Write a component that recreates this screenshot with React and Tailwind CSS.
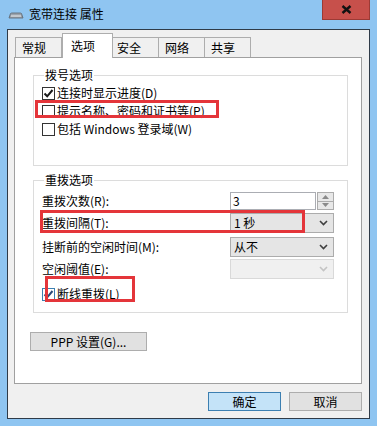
import React from 'react';

const font = "font-['Noto_Sans_CJK_SC','Noto_Sans',sans-serif]";

const CheckMark = ({ color = '#1a1a1a' }) => (
  <svg width="11" height="11" viewBox="0 0 11 11" className="block">
    <path d="M1.5 5.5 L4.2 8.3 L9.5 2" fill="none" stroke={color} strokeWidth="2" />
  </svg>
);

const Checkbox = ({ checked, blue }) => (
  <div
    className={`w-[13px] h-[13px] border bg-white flex items-center justify-center shrink-0 ${
      blue ? 'border-[#3c7fb1]' : 'border-[#333333]'
    }`}
  >
    {checked && <CheckMark color={blue ? '#2a4a78' : '#1a1a1a'} />}
  </div>
);

const Chevron = ({ color = '#444' }) => (
  <svg width="9" height="6" viewBox="0 0 9 6" className="block">
    <path d="M1 1 L4.5 4.5 L8 1" fill="none" stroke={color} strokeWidth="1.6" />
  </svg>
);

const Combo = ({ value, disabled }) => (
  <div
    className={`w-[104px] h-[20px] border flex items-center pl-[3px] pr-[5px] ${
      disabled ? 'border-[#d9d9d9] bg-[#f0f0f0]' : 'border-[#acacac] bg-[#e5e5e5]'
    }`}
  >
    <span className="flex-1 leading-none">{value}</span>
    <Chevron color={disabled ? '#c4c4c4' : '#404040'} />
  </div>
);

const Spinner = () => (
  <div className="flex items-stretch h-[18px]">
    <div className="w-[86px] border border-[#abadb3] bg-white flex items-center pl-[2px] leading-none">3</div>
    <div className="w-[17px] flex flex-col ml-[1px]">
      <div className="flex-1 border border-[#acacac] bg-[#e8e8e8] flex items-center justify-center">
        <svg width="7" height="4" viewBox="0 0 7 4"><path d="M0 4 L3.5 0 L7 4 Z" fill="#8a8a8a" /></svg>
      </div>
      <div className="flex-1 border border-t-0 border-[#acacac] bg-[#e8e8e8] flex items-center justify-center">
        <svg width="7" height="4" viewBox="0 0 7 4"><path d="M0 0 L3.5 4 L7 0 Z" fill="#8a8a8a" /></svg>
      </div>
    </div>
  </div>
);

const tabs = [
  { label: '常规', w: 'w-[47px]', pl: 'pl-[6px]' },
  { label: '选项', w: 'w-[51px]', pl: 'pl-[8px]', active: true },
  { label: '安全', w: 'w-[47px]', pl: 'pl-[4px]' },
  { label: '网络', w: 'w-[47px]', pl: 'pl-[6px]' },
  { label: '共享', w: 'w-[47px]', pl: 'pl-[6px]' },
];

export default function App() {
  return (
    <div className={`relative w-[377px] h-[426px] bg-[#8fc5f1] overflow-hidden text-[12px] text-black ${font}`}>
      {/* Title bar */}
      <div className="h-[29px] flex items-start">
        <svg width="16" height="7" viewBox="0 0 16 7" className="ml-[8px] mt-[12px]">
          <path d="M1 6 L2.5 1.5 Q3 1 4 1 L12 1 Q13 1 13.5 1.5 L15 6 Z" fill="#9aa3ad" stroke="#5d6670" strokeWidth="0.8" />
          <path d="M3 4 L13 4" stroke="#ffffff" strokeWidth="0.8" />
        </svg>
        <span className="ml-[5px] mt-[6px] text-[12px] leading-[16px]">宽带连接 属性</span>
        <div className="ml-auto mr-[7px] w-[48px] h-[20px] bg-[#c7504b] border border-t-0 border-[#9c3a35] flex items-center justify-center">
          <svg width="11" height="9" viewBox="0 0 11 9">
            <path d="M1.5 1 L9.5 8 M9.5 1 L1.5 8" stroke="#111" strokeWidth="2.4" />
          </svg>
        </div>
      </div>

      {/* Dialog body */}
      <div className="mx-[7px] h-[390px] border border-[#2f3b48] bg-[#f0f0f0] flex flex-col">
        {/* Tabs */}
        <div className="h-[27px] flex items-end pl-[7px]">
          {tabs.map((t) =>
            t.active ? (
              <div
                key={t.label}
                className={`${t.w} ${t.pl} h-[25px] -mb-px relative z-10 bg-white border border-b-0 border-[#adadad] flex items-center leading-none`}
              >
                {t.label}
              </div>
            ) : (
              <div
                key={t.label}
                className={`${t.w} ${t.pl} h-[20px] bg-[#f0f0f0] border border-b-0 border-[#adadad] -ml-px first:ml-0 flex items-center leading-none`}
              >
                {t.label}
              </div>
            )
          )}
        </div>

        {/* Tab panel */}
        <div className="ml-[6px] w-[348px] h-[327px] border border-[#a0a0a0] bg-white flex flex-col">
          <fieldset className="ml-[18px] mt-[9px] w-[315px] h-[99px] border border-[#dcdcdc] pl-[8px]">
            <legend className="ml-[2px] px-[1px] leading-[16px]">拨号选项</legend>
            <div className="flex items-center h-[18px] mt-[1px]">
              <Checkbox checked />
              <span className="ml-[2px] leading-none">连接时显示进度(D)</span>
            </div>
            <div className="flex items-center h-[18px]">
              <Checkbox />
              <span className="ml-[2px] leading-none">提示名称、密码和证书等(P)</span>
            </div>
            <div className="flex items-center h-[18px]">
              <Checkbox />
              <span className="ml-[2px] leading-none">包括 Windows 登录域(W)</span>
            </div>
          </fieldset>

          <fieldset className="ml-[18px] mt-[6px] w-[315px] h-[141px] border border-[#dcdcdc] pl-[8px]">
            <legend className="ml-[2px] px-[1px] leading-[16px]">重拨选项</legend>
            <div className="flex items-center h-[20px] mt-[3px]">
              <span className="w-[188px] leading-none">重拨次数(R):</span>
              <Spinner />
            </div>
            <div className="flex items-center h-[20px] mt-[2px]">
              <span className="w-[188px] leading-none">重拨间隔(T):</span>
              <Combo value="1 秒" />
            </div>
            <div className="flex items-center h-[20px] mt-[4px]">
              <span className="w-[188px] leading-none">挂断前的空闲时间(M):</span>
              <Combo value="从不" />
            </div>
            <div className="flex items-center h-[20px] mt-[2px]">
              <span className="w-[188px] leading-none">空闲阈值(E):</span>
              <Combo disabled />
            </div>
            <div className="flex items-center h-[18px] mt-[6px]">
              <Checkbox checked blue />
              <span className="ml-[2px] leading-none">断线重拨(L)</span>
            </div>
          </fieldset>

          <button className="ml-[15px] mt-[19px] w-[117px] h-[19px] bg-[#e1e1e1] border border-[#adadad] flex items-center justify-center leading-none">
            PPP 设置(G)...
          </button>
        </div>

        {/* Dialog buttons */}
        <div className="mt-[8px] flex justify-end gap-[8px] pr-[7px]">
          <button className="w-[73px] h-[19px] bg-[#c4e3f8] border border-[#3c7fb1] flex items-center justify-center leading-none">
            确定
          </button>
          <button className="w-[73px] h-[19px] bg-[#e1e1e1] border border-[#adadad] flex items-center justify-center leading-none">
            取消
          </button>
        </div>
      </div>

      {/* Red annotation boxes */}
      <div className="absolute left-[35px] top-[100px] w-[184px] h-[18px] border-[3px] border-[#e4353a]" />
      <div className="absolute left-[40px] top-[210px] w-[265px] h-[23px] border-[3px] border-[#e4353a]" />
      <div className="absolute left-[45px] top-[276px] w-[90px] h-[26px] border-[3px] border-[#e4353a]" />
    </div>
  );
}
